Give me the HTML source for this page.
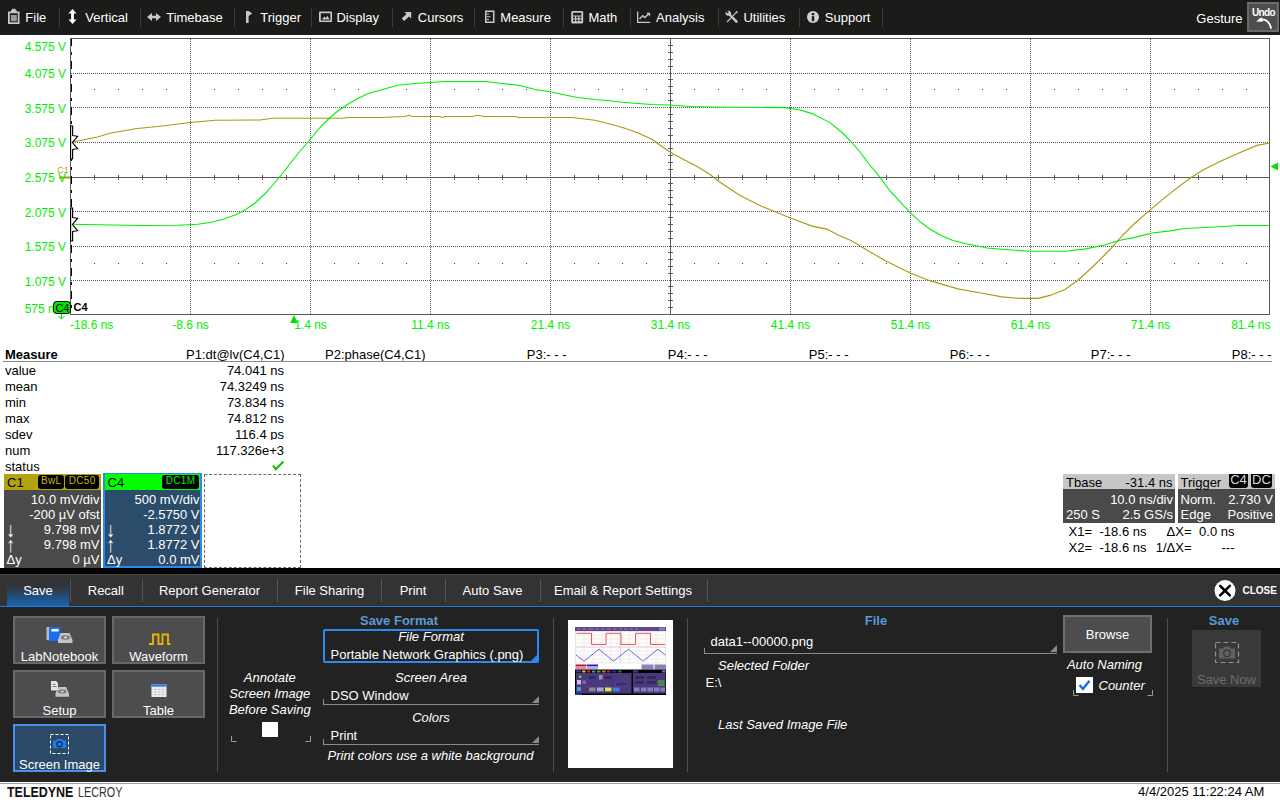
<!DOCTYPE html>
<html lang="en"><head><meta charset="utf-8"><title>Oscilloscope - Save Screen Image</title>
<style>
html,body{margin:0;padding:0;}
body{width:1280px;height:800px;overflow:hidden;background:#fff;position:relative;font-family:"Liberation Sans",Arial,sans-serif;font-size:13px;}
.t{position:absolute;white-space:pre;}
.a{position:absolute;}
.i{font-style:italic;}
.b{font-weight:bold;}
#menubar{position:absolute;left:0;top:0;width:1280px;height:35px;background:#1b1b19;}
.msep{position:absolute;top:8px;width:1px;height:19px;background:#3c3c3c;}
.btn{position:absolute;box-sizing:border-box;background:#4d4d4f;border:2px solid #686868;}
.vsep{position:absolute;width:1px;top:618px;height:154px;background:#4e4e4e;}
.tsep{position:absolute;width:1px;top:579px;height:23px;background:#555;}
.badge{position:absolute;background:#000;border-radius:3px;box-sizing:border-box;text-align:center;overflow:hidden;}
.ul{position:absolute;height:1px;background:#8a8a8a;}
</style></head><body>

<div id="menubar">
<div class="a" style="left:0;top:34px;width:1280px;height:1px;background:#10202e;"></div>
<div class="t" style="top:11.00px;font-size:13px;line-height:13px;color:#fff;left:25.3px;">File</div>
<div class="t" style="top:11.00px;font-size:13px;line-height:13px;color:#fff;left:85.3px;">Vertical</div>
<div class="t" style="top:11.00px;font-size:13px;line-height:13px;color:#fff;left:166.2px;">Timebase</div>
<div class="t" style="top:11.00px;font-size:13px;line-height:13px;color:#fff;left:260.3px;">Trigger</div>
<div class="t" style="top:11.00px;font-size:13px;line-height:13px;color:#fff;left:336.4px;">Display</div>
<div class="t" style="top:11.00px;font-size:13px;line-height:13px;color:#fff;left:417.8px;">Cursors</div>
<div class="t" style="top:11.00px;font-size:13px;line-height:13px;color:#fff;left:500.3px;">Measure</div>
<div class="t" style="top:11.00px;font-size:13px;line-height:13px;color:#fff;left:588.4px;">Math</div>
<div class="t" style="top:11.00px;font-size:13px;line-height:13px;color:#fff;left:656px;">Analysis</div>
<div class="t" style="top:11.00px;font-size:13px;line-height:13px;color:#fff;left:743.4px;">Utilities</div>
<div class="t" style="top:11.00px;font-size:13px;line-height:13px;color:#fff;left:824.8px;">Support</div>
<div class="msep" style="left:59px"></div>
<div class="msep" style="left:140px"></div>
<div class="msep" style="left:234px"></div>
<div class="msep" style="left:311px"></div>
<div class="msep" style="left:392px"></div>
<div class="msep" style="left:474px"></div>
<div class="msep" style="left:563px"></div>
<div class="msep" style="left:630px"></div>
<div class="msep" style="left:718px"></div>
<div class="msep" style="left:799px"></div>
<div class="msep" style="left:882px"></div>
<svg class="a" style="left:0;top:0" width="900" height="35" viewBox="0 0 900 35">
<g fill="#c8c8c8" stroke="none">
<!-- File: clipboard -->
<path d="M8 11.5h3v-1.5h1v-1.2h3.5v1.2h1v1.5h3v12.5h-11.5z M9.8 13.3v9h8v-9z" fill-rule="evenodd"/>
<rect x="10.8" y="15" width="6" height="6.3" fill="#9a9a9a"/>
<!-- Vertical: up-down arrow -->
<path d="M72.5 9l4 4.5h-2.6v6h2.6l-4 4.5l-4-4.5h2.6v-6h-2.6z" fill="#fff"/>
<!-- Timebase: left-right arrow -->
<path d="M147 17l5-4v2.7h4v-2.7l5 4l-5 4v-2.7h-4v2.7z"/>
<!-- Trigger: flag -->
<path d="M246 11h2.600l3.600 2.500l-3.600 2.500v7h-2.600z"/>
<!-- Display -->
<path d="M319 12.5q0-1 1-1h11q1 0 1 1v8.500q0 1-1 1h-11q-1 0-1-1z M320.800 13.200v7.200h9.600v-7.200z" fill-rule="evenodd"/>
<path d="M322 19.500l2.300-3l1.500 1.600l1.600-2.300l2.200 3.700z"/>
<!-- Cursors: arrow NE -->
<path d="M404.500 12h6.700v6.700l-2.200-2.200l-4.800 4.600l-2.500-2.500l4.800-4.600z"/>
<!-- Measure: ruler -->
<path d="M485 10.500h9.500v12.500h-9.500z M486.500 12v9.500h6.500v-9.500z" fill-rule="evenodd"/>
<path d="M486.500 13.500h2.500v1h-2.500z M486.500 16.200h4v1h-4z M486.500 19h2.500v1h-2.500z"/>
<!-- Math: calculator -->
<path d="M571.200 12.500q0-1.500 1.500-1.500h9q1.500 0 1.500 1.500v9.500q0 1.500-1.500 1.500h-9q-1.500 0-1.500-1.500z M573 12.800v2.600h8.400v-2.600z M573 16.600v1.600h2v-1.600z M576.200 16.600v1.600h2v-1.600z M579.400 16.600v1.600h2v-1.600z M573 19.600v1.600h2v-1.600z M576.200 19.600v1.600h2v-1.600z M579.400 19.600v1.600h2v-1.600z" fill-rule="evenodd"/>
<!-- Analysis: chart -->
<path d="M637 11.500h1.300v10.200h12v1.300h-13.300z"/>
<path d="M639.500 19l3.200-3.200l2.200 1.800l3.500-3.500" fill="none" stroke="#c8c8c8" stroke-width="1.400"/>
<path d="M646.500 12.800h3.600v3.600z"/>
<!-- Utilities: tools -->
<path d="M726.500 21.500l8.500-8.500l1.500-2.200l1.500 1.500l-2.200 1.500l-8.300 8.700z"/>
<path d="M727 11q2.500-.8 3.800 1.200q.7 1.200 .2 2.300l6.500 6.200q.8 1.500-.5 2q-1 .5-1.800-.5l-6-6.500q-2 .5-3.200-1q-1-1.500-.3-3l2 1.800l1.200-1.300z"/>
<!-- Support: info -->
<circle cx="813" cy="17" r="6" fill="#d0d0d0"/>
<rect x="811.800" y="13" width="2.400" height="2.200" fill="#1b1b19"/>
<rect x="811.800" y="16.200" width="2.400" height="5" fill="#1b1b19"/>
</g></svg>
<div class="t" style="top:12.00px;font-size:13px;line-height:13px;color:#fff;left:1196.3px;">Gesture</div>
<div class="a" style="left:1247px;top:2px;width:32px;height:30px;box-sizing:border-box;background:#4e4e4e;border:2px solid #6a6a6a;"></div>
<div class="t" style="top:7.93px;font-size:10px;line-height:10px;color:#fff;left:1063.5px;width:400px;text-align:center;font-weight:bold;letter-spacing:-0.6px;">Undo</div>
<svg class="a" style="left:1247px;top:2px" width="32" height="30" viewBox="0 0 32 30">
<path d="M12.500 17.500q9-1.500 11.500 8.500" fill="none" stroke="#fff" stroke-width="1.800" stroke-linecap="round"/>
<path d="M9 19.500l6-4.200l.8 4.400z" fill="#fff"/></svg>
</div>
<svg class="a" style="left:0;top:0" width="1280" height="345" viewBox="0 0 1280 345">
<g shape-rendering="crispEdges" stroke="#5a5a5a" stroke-width="1" fill="none">
<line x1="190.5" y1="39" x2="190.5" y2="314" stroke-dasharray="1 1"/>
<line x1="310.5" y1="39" x2="310.5" y2="314" stroke-dasharray="1 1"/>
<line x1="430.5" y1="39" x2="430.5" y2="314" stroke-dasharray="1 1"/>
<line x1="550.5" y1="39" x2="550.5" y2="314" stroke-dasharray="1 1"/>
<line x1="790.5" y1="39" x2="790.5" y2="314" stroke-dasharray="1 1"/>
<line x1="910.5" y1="39" x2="910.5" y2="314" stroke-dasharray="1 1"/>
<line x1="1030.5" y1="39" x2="1030.5" y2="314" stroke-dasharray="1 1"/>
<line x1="1150.5" y1="39" x2="1150.5" y2="314" stroke-dasharray="1 1"/>
<line x1="71" y1="73.5" x2="1269" y2="73.5" stroke-dasharray="1 1"/>
<line x1="71" y1="107.5" x2="1269" y2="107.5" stroke-dasharray="1 1"/>
<line x1="71" y1="142.5" x2="1269" y2="142.5" stroke-dasharray="1 1"/>
<line x1="71" y1="211.5" x2="1269" y2="211.5" stroke-dasharray="1 1"/>
<line x1="71" y1="246.5" x2="1269" y2="246.5" stroke-dasharray="1 1"/>
<line x1="71" y1="280.5" x2="1269" y2="280.5" stroke-dasharray="1 1"/>
<line x1="71" y1="177.5" x2="1269" y2="177.5"/>
<line x1="670.5" y1="39" x2="670.5" y2="314"/>
<path d="M94.5 175v5 M118.5 175v5 M142.5 175v5 M166.5 175v5 M214.5 175v5 M238.5 175v5 M262.5 175v5 M286.5 175v5 M334.5 175v5 M358.5 175v5 M382.5 175v5 M406.5 175v5 M454.5 175v5 M478.5 175v5 M502.5 175v5 M526.5 175v5 M574.5 175v5 M598.5 175v5 M622.5 175v5 M646.5 175v5 M694.5 175v5 M718.5 175v5 M742.5 175v5 M766.5 175v5 M814.5 175v5 M838.5 175v5 M862.5 175v5 M886.5 175v5 M934.5 175v5 M958.5 175v5 M982.5 175v5 M1006.5 175v5 M1054.5 175v5 M1078.5 175v5 M1102.5 175v5 M1126.5 175v5 M1174.5 175v5 M1198.5 175v5 M1222.5 175v5 M1246.5 175v5 M668 45.5h5 M668 52.5h5 M668 59.5h5 M668 66.5h5 M668 79.5h5 M668 86.5h5 M668 93.5h5 M668 100.5h5 M668 114.5h5 M668 121.5h5 M668 128.5h5 M668 135.5h5 M668 148.5h5 M668 155.5h5 M668 162.5h5 M668 169.5h5 M668 183.5h5 M668 190.5h5 M668 197.5h5 M668 204.5h5 M668 217.5h5 M668 224.5h5 M668 231.5h5 M668 238.5h5 M668 252.5h5 M668 259.5h5 M668 266.5h5 M668 273.5h5 M668 286.5h5 M668 293.5h5 M668 300.5h5 M668 307.5h5"/>
<path d="M94 89.5h1 M118 89.5h1 M142 89.5h1 M166 89.5h1 M214 89.5h1 M238 89.5h1 M262 89.5h1 M286 89.5h1 M334 89.5h1 M358 89.5h1 M382 89.5h1 M406 89.5h1 M454 89.5h1 M478 89.5h1 M502 89.5h1 M526 89.5h1 M574 89.5h1 M598 89.5h1 M622 89.5h1 M646 89.5h1 M694 89.5h1 M718 89.5h1 M742 89.5h1 M766 89.5h1 M814 89.5h1 M838 89.5h1 M862 89.5h1 M886 89.5h1 M934 89.5h1 M958 89.5h1 M982 89.5h1 M1006 89.5h1 M1054 89.5h1 M1078 89.5h1 M1102 89.5h1 M1126 89.5h1 M1174 89.5h1 M1198 89.5h1 M1222 89.5h1 M1246 89.5h1 M94 263.5h1 M118 263.5h1 M142 263.5h1 M166 263.5h1 M214 263.5h1 M238 263.5h1 M262 263.5h1 M286 263.5h1 M334 263.5h1 M358 263.5h1 M382 263.5h1 M406 263.5h1 M454 263.5h1 M478 263.5h1 M502 263.5h1 M526 263.5h1 M574 263.5h1 M598 263.5h1 M622 263.5h1 M646 263.5h1 M694 263.5h1 M718 263.5h1 M742 263.5h1 M766 263.5h1 M814 263.5h1 M838 263.5h1 M862 263.5h1 M886 263.5h1 M934 263.5h1 M958 263.5h1 M982 263.5h1 M1006 263.5h1 M1054 263.5h1 M1078 263.5h1 M1102 263.5h1 M1126 263.5h1 M1174 263.5h1 M1198 263.5h1 M1222 263.5h1 M1246 263.5h1" stroke="#404040"/>
<rect x="70.5" y="38.5" width="1199" height="276"/>
</g>
<polyline points="70.5,142.5 85,139.5 97.5,137 110,133.25 135,128.75 160,126.25 190,122.5 215,120.25 260,120 272.5,118.25 342.5,118.25 347.5,117.5 380,117.5 405,116.5 408.75,115.25 412.5,116.5 440,116.5 442.5,117.5 445,116.5 472.5,116.5 477.5,115.25 483.75,116.5 515,116.5 518.75,117.5 572.5,117.5 582.5,118.75 595,120.25 610,124 622.5,127.5 637.5,132.75 652.5,139.5 662.5,147 670,152 680,157.4 698,167 710,174.5 717.5,180.5 740,195.5 761,206 790.4,218 812,226.1 827,229.1 839,235.4 851,240.5 866,249.5 884,260 902,269 910.4,272.9 929,280.4 944,284.9 959,289.1 981,293 1002,296.9 1020,298.4 1038,298.4 1050,295.4 1065,289.4 1077,281 1092,267.5 1110,249.5 1122,236 1134,224 1150.5,209.6 1170,193.4 1191,177.5 1203,170 1221,161 1239,152.9 1257,145.4 1269.6,143" fill="none" stroke="#a89a10" stroke-width="1.1"/>
<polyline points="70.5,224.25 112.5,225 142.5,225.5 177.5,225.25 197.5,224.25 210,222.5 222.5,219.5 235,215 245,210 255,203 265,193.75 275,182.5 281.25,175 290,163.75 300,151.25 310,139.5 320,127.5 330,117.5 337.5,111.25 347.5,104.5 357.5,98.75 367.5,93.75 382.5,89.5 397.5,85.25 415,83.5 430,82.5 445,81.5 485,81.5 500,83.25 520,85.5 535,89.5 550,91.75 565,95 577.5,97.5 595,99.5 610,100.75 622.5,102.25 637.5,103.5 652.5,104.5 670,105 690,106.5 710,107 785,107.6 800,110 812,113.6 830,122.6 842,132.5 851,141.5 860,152 869,164 879.5,176.6 890,191 900.5,202.1 910.4,212.9 920,221.6 929,228.5 941,235.4 953,240.5 965,243.5 980,246.5 987,248 1008,249.8 1030.5,251.3 1065,251.3 1086,248.9 1104,245 1119,240.5 1137,236.9 1152,233 1170,230.9 1185,228.5 1215,227 1239,225.5 1269.6,225.5" fill="none" stroke="#00f000" stroke-width="1.1"/>
<line x1="71.5" y1="39" x2="71.5" y2="314" stroke="#000" stroke-width="1.600" stroke-dasharray="8 6 3 6" stroke-dashoffset="0.7" shape-rendering="crispEdges"/>
<path d="M70.600 126.0h2v9.500l5 .8l-5.200 6.200l5.200 6.200l-5 .8v9.500h-2z" fill="#fff" stroke="#000" stroke-width="1.150"/>
<path d="M70.600 208.0h2v9.500l5 .8l-5.200 6.200l5.200 6.200l-5 .8v9.500h-2z" fill="#fff" stroke="#000" stroke-width="1.150"/>
<line x1="59" y1="177.500" x2="70" y2="177.500" stroke="#a89a10" stroke-width="2"/>
<path d="M1270.500 166.500l7.500-4v8z" fill="#00e000"/>
<path d="M294 315l3.800 8h-7.600z" fill="#00e000"/>
<rect x="53.500" y="301.500" width="17" height="12" rx="3" fill="#00e400" stroke="#000" stroke-width="1"/>
<path d="M61.500 314v4.500m-3-2.500l3 3l3-3" fill="none" stroke="#00d000" stroke-width="1"/>
</svg>
<div class="t" style="top:40.84px;font-size:12px;line-height:12px;color:#00ee00;right:1214px;text-align:right;">4.575 V</div>
<div class="t" style="top:67.84px;font-size:12px;line-height:12px;color:#00ee00;right:1214px;text-align:right;">4.075 V</div>
<div class="t" style="top:102.84px;font-size:12px;line-height:12px;color:#00ee00;right:1214px;text-align:right;">3.575 V</div>
<div class="t" style="top:137.14px;font-size:12px;line-height:12px;color:#00ee00;right:1214px;text-align:right;">3.075 V</div>
<div class="t" style="top:171.84px;font-size:12px;line-height:12px;color:#00ee00;right:1214px;text-align:right;">2.575 V</div>
<div class="t" style="top:207.14px;font-size:12px;line-height:12px;color:#00ee00;right:1214px;text-align:right;">2.075 V</div>
<div class="t" style="top:240.84px;font-size:12px;line-height:12px;color:#00ee00;right:1214px;text-align:right;">1.575 V</div>
<div class="t" style="top:275.84px;font-size:12px;line-height:12px;color:#00ee00;right:1214px;text-align:right;">1.075 V</div>
<div class="t" style="top:302.84px;font-size:12px;line-height:12px;color:#00ee00;left:24.7px;width:28.5px;overflow:hidden;">575 mV</div>
<div class="t" style="top:166.38px;font-size:9px;line-height:9px;color:#b0a020;left:57.2px;">C1</div>
<div class="t" style="top:302.99px;font-size:11px;line-height:11px;color:#000;left:-137.6px;width:400px;text-align:center;letter-spacing:-0.2px;">C4</div>
<div class="t" style="top:301.99px;font-size:11px;line-height:11px;color:#000;left:73.5px;font-weight:bold;">C4</div>
<div class="t" style="top:318.84px;font-size:12px;line-height:12px;color:#00ee00;left:70px;">-18.6 ns</div>
<div class="t" style="top:318.84px;font-size:12px;line-height:12px;color:#00ee00;left:-9.5px;width:400px;text-align:center;">-8.6 ns</div>
<div class="t" style="top:318.84px;font-size:12px;line-height:12px;color:#00ee00;left:110.5px;width:400px;text-align:center;">1.4 ns</div>
<div class="t" style="top:318.84px;font-size:12px;line-height:12px;color:#00ee00;left:230.5px;width:400px;text-align:center;">11.4 ns</div>
<div class="t" style="top:318.84px;font-size:12px;line-height:12px;color:#00ee00;left:350.5px;width:400px;text-align:center;">21.4 ns</div>
<div class="t" style="top:318.84px;font-size:12px;line-height:12px;color:#00ee00;left:470.5px;width:400px;text-align:center;">31.4 ns</div>
<div class="t" style="top:318.84px;font-size:12px;line-height:12px;color:#00ee00;left:590.5px;width:400px;text-align:center;">41.4 ns</div>
<div class="t" style="top:318.84px;font-size:12px;line-height:12px;color:#00ee00;left:710.5px;width:400px;text-align:center;">51.4 ns</div>
<div class="t" style="top:318.84px;font-size:12px;line-height:12px;color:#00ee00;left:830.5px;width:400px;text-align:center;">61.4 ns</div>
<div class="t" style="top:318.84px;font-size:12px;line-height:12px;color:#00ee00;left:950.5px;width:400px;text-align:center;">71.4 ns</div>
<div class="t" style="top:318.84px;font-size:12px;line-height:12px;color:#00ee00;right:9.5px;text-align:right;">81.4 ns</div>
<div class="a" style="left:0;top:344px;width:1280px;height:18px;overflow:hidden;">
<div class="t" style="top:4.00px;font-size:13px;line-height:13px;color:#000;left:5px;font-weight:bold;">Measure</div>
<div class="t" style="top:4.00px;font-size:13px;line-height:13px;color:#000;right:995.5px;text-align:right;">P1:dt@lv(C4,C1)</div>
<div class="t" style="top:4.00px;font-size:13px;line-height:13px;color:#000;right:854.5px;text-align:right;">P2:phase(C4,C1)</div>
<div class="t" style="top:4.00px;font-size:13px;line-height:13px;color:#000;right:713.5px;text-align:right;">P3:- - -</div>
<div class="t" style="top:4.00px;font-size:13px;line-height:13px;color:#000;right:572.5px;text-align:right;">P4:- - -</div>
<div class="t" style="top:4.00px;font-size:13px;line-height:13px;color:#000;right:431.5px;text-align:right;">P5:- - -</div>
<div class="t" style="top:4.00px;font-size:13px;line-height:13px;color:#000;right:290.5px;text-align:right;">P6:- - -</div>
<div class="t" style="top:4.00px;font-size:13px;line-height:13px;color:#000;right:149.5px;text-align:right;">P7:- - -</div>
<div class="t" style="top:4.00px;font-size:13px;line-height:13px;color:#000;right:8.5px;text-align:right;">P8:- - -</div>
</div>
<div class="a" style="left:3px;top:361px;width:1269px;height:1px;background:#888;"></div>
<div class="a" style="left:0;top:360px;width:300px;height:16px;overflow:hidden;">
<div class="t" style="top:4.00px;font-size:13px;line-height:13px;color:#000;left:5px;">value</div>
<div class="t" style="top:4.00px;font-size:13px;line-height:13px;color:#000;left:284px;left:auto;right:16px;text-align:right;">74.041 ns</div>
</div>
<div class="a" style="left:0;top:376px;width:300px;height:16px;overflow:hidden;">
<div class="t" style="top:4.00px;font-size:13px;line-height:13px;color:#000;left:5px;">mean</div>
<div class="t" style="top:4.00px;font-size:13px;line-height:13px;color:#000;left:284px;left:auto;right:16px;text-align:right;">74.3249 ns</div>
</div>
<div class="a" style="left:0;top:392px;width:300px;height:16px;overflow:hidden;">
<div class="t" style="top:4.00px;font-size:13px;line-height:13px;color:#000;left:5px;">min</div>
<div class="t" style="top:4.00px;font-size:13px;line-height:13px;color:#000;left:284px;left:auto;right:16px;text-align:right;">73.834 ns</div>
</div>
<div class="a" style="left:0;top:408px;width:300px;height:16px;overflow:hidden;">
<div class="t" style="top:4.00px;font-size:13px;line-height:13px;color:#000;left:5px;">max</div>
<div class="t" style="top:4.00px;font-size:13px;line-height:13px;color:#000;left:284px;left:auto;right:16px;text-align:right;">74.812 ns</div>
</div>
<div class="a" style="left:0;top:424px;width:300px;height:16px;overflow:hidden;">
<div class="t" style="top:4.00px;font-size:13px;line-height:13px;color:#000;left:5px;">sdev</div>
<div class="t" style="top:4.00px;font-size:13px;line-height:13px;color:#000;left:284px;left:auto;right:16px;text-align:right;">116.4 ps</div>
</div>
<div class="a" style="left:0;top:440px;width:300px;height:16px;overflow:hidden;">
<div class="t" style="top:4.00px;font-size:13px;line-height:13px;color:#000;left:5px;">num</div>
<div class="t" style="top:4.00px;font-size:13px;line-height:13px;color:#000;left:284px;left:auto;right:16px;text-align:right;">117.326e+3</div>
</div>
<div class="a" style="left:0;top:456px;width:300px;height:16px;overflow:hidden;">
<div class="t" style="top:4.00px;font-size:13px;line-height:13px;color:#000;left:5px;">status</div>
</div>
<svg class="a" style="left:271px;top:459px" width="14" height="12" viewBox="0 0 14 12"><path d="M2 6.500l2.800 3.500l7.500-7.500" fill="none" stroke="#20d020" stroke-width="2.200"/><path d="M2.500 7.800l2.300 2.700l7.800-7.500" fill="none" stroke="#0a8a0a" stroke-width=".8"/></svg>
<div class="a" style="left:4px;top:474px;width:97px;height:16px;background:#b3a30f;"></div>
<div class="a" style="left:4px;top:490px;width:97px;height:78px;background:#4a4a4a;"></div>
<div class="t" style="top:476.00px;font-size:13px;line-height:13px;color:#000;left:7px;">C1</div>
<div class="badge" style="left:38px;top:475px;width:26px;height:14px;"></div>
<div class="badge" style="left:65px;top:475px;width:34px;height:14px;"></div>
<div class="t" style="top:476.34px;font-size:10px;line-height:10px;color:#c4b41c;left:-148.8px;width:400px;text-align:center;letter-spacing:.3px;">BwL</div>
<div class="t" style="top:476.34px;font-size:10px;line-height:10px;color:#c4b41c;left:-117.8px;width:400px;text-align:center;letter-spacing:.3px;">DC50</div>
<div class="t" style="top:492.50px;font-size:13px;line-height:13px;color:#fff;right:1180.5px;text-align:right;">10.0 mV/div</div>
<div class="t" style="top:507.50px;font-size:13px;line-height:13px;color:#fff;right:1180.5px;text-align:right;">-200 µV ofst</div>
<div class="t" style="top:522.50px;font-size:13px;line-height:13px;color:#fff;right:1180.5px;text-align:right;">9.798 mV</div>
<div class="t" style="top:537.50px;font-size:13px;line-height:13px;color:#fff;right:1180.5px;text-align:right;">9.798 mV</div>
<div class="t" style="top:552.50px;font-size:13px;line-height:13px;color:#fff;right:1180.5px;text-align:right;">0 µV</div>
<div class="t" style="top:519.22px;font-size:21px;line-height:21px;color:#fff;left:5.5px;transform:scaleX(.85);transform-origin:0 0;">↓</div>
<div class="t" style="top:534.22px;font-size:21px;line-height:21px;color:#fff;left:5.5px;transform:scaleX(.85);transform-origin:0 0;">↑</div>
<div class="t" style="top:552.50px;font-size:13px;line-height:13px;color:#fff;left:6.5px;">Δy</div>
<div class="a" style="left:103px;top:473px;width:99px;height:95px;background:#2b4c6b;box-sizing:border-box;border:2px solid #2a8af0;"></div>
<div class="a" style="left:105px;top:474px;width:95px;height:16px;background:#00ff00;"></div>
<div class="t" style="top:476.00px;font-size:13px;line-height:13px;color:#000;left:107.5px;">C4</div>
<div class="badge" style="left:162px;top:475px;width:37px;height:14px;"></div>
<div class="t" style="top:476.34px;font-size:10px;line-height:10px;color:#00f000;left:-19.400000000000006px;width:400px;text-align:center;letter-spacing:.3px;">DC1M</div>
<div class="t" style="top:492.50px;font-size:13px;line-height:13px;color:#fff;right:1080.5px;text-align:right;">500 mV/div</div>
<div class="t" style="top:507.50px;font-size:13px;line-height:13px;color:#fff;right:1080.5px;text-align:right;">-2.5750 V</div>
<div class="t" style="top:522.50px;font-size:13px;line-height:13px;color:#fff;right:1080.5px;text-align:right;">1.8772 V</div>
<div class="t" style="top:537.50px;font-size:13px;line-height:13px;color:#fff;right:1080.5px;text-align:right;">1.8772 V</div>
<div class="t" style="top:552.50px;font-size:13px;line-height:13px;color:#fff;right:1080.5px;text-align:right;">0.0 mV</div>
<div class="t" style="top:519.22px;font-size:21px;line-height:21px;color:#fff;left:106px;transform:scaleX(.85);transform-origin:0 0;">↓</div>
<div class="t" style="top:534.22px;font-size:21px;line-height:21px;color:#fff;left:106px;transform:scaleX(.85);transform-origin:0 0;">↑</div>
<div class="t" style="top:552.50px;font-size:13px;line-height:13px;color:#fff;left:107px;">Δy</div>
<div class="a" style="left:204px;top:474px;width:97px;height:94px;box-sizing:border-box;border:1px dashed #6a6a6a;"></div>
<div class="a" style="left:1063px;top:474px;width:112px;height:15px;background:#c6c6c6;"></div>
<div class="a" style="left:1063px;top:489px;width:112px;height:34px;background:#4a4a4a;"></div>
<div class="t" style="top:475.50px;font-size:13px;line-height:13px;color:#000;left:1066px;">Tbase</div>
<div class="t" style="top:475.50px;font-size:13px;line-height:13px;color:#000;right:107.5px;text-align:right;">-31.4 ns</div>
<div class="t" style="top:493.00px;font-size:13px;line-height:13px;color:#fff;right:107px;text-align:right;">10.0 ns/div</div>
<div class="t" style="top:507.50px;font-size:13px;line-height:13px;color:#fff;left:1066px;">250 S</div>
<div class="t" style="top:507.50px;font-size:13px;line-height:13px;color:#fff;right:107px;text-align:right;">2.5 GS/s</div>
<div class="a" style="left:1178px;top:474px;width:97px;height:15px;background:#c6c6c6;"></div>
<div class="a" style="left:1178px;top:489px;width:97px;height:34px;background:#4a4a4a;"></div>
<div class="t" style="top:475.50px;font-size:13px;line-height:13px;color:#000;left:1180.5px;">Trigger</div>
<div class="badge" style="left:1229px;top:474px;width:19px;height:14px;border-radius:0 0 3px 3px;"></div>
<div class="badge" style="left:1251px;top:474px;width:21px;height:14px;border-radius:0 0 3px 3px;"></div>
<div class="a" style="left:1229px;top:474px;width:44px;height:14px;overflow:hidden;"><div class="t" style="top:-0.80px;font-size:13px;line-height:13px;color:#d8d8d8;left:-190.5px;width:400px;text-align:center;">C4</div><div class="t" style="top:-0.80px;font-size:13px;line-height:13px;color:#d8d8d8;left:-167.5px;width:400px;text-align:center;">DC</div></div>
<div class="t" style="top:493.00px;font-size:13px;line-height:13px;color:#fff;left:1180.5px;">Norm.</div>
<div class="t" style="top:493.00px;font-size:13px;line-height:13px;color:#fff;right:7px;text-align:right;">2.730 V</div>
<div class="t" style="top:507.50px;font-size:13px;line-height:13px;color:#fff;left:1180.5px;">Edge</div>
<div class="t" style="top:507.50px;font-size:13px;line-height:13px;color:#fff;right:7px;text-align:right;">Positive</div>
<div class="t" style="top:524.50px;font-size:13px;line-height:13px;color:#000;left:1068.5px;">X1=</div>
<div class="t" style="top:524.50px;font-size:13px;line-height:13px;color:#000;right:133.5px;text-align:right;">-18.6 ns</div>
<div class="t" style="top:524.50px;font-size:13px;line-height:13px;color:#000;right:88.5px;text-align:right;">ΔX=</div>
<div class="t" style="top:524.50px;font-size:13px;line-height:13px;color:#000;right:45.5px;text-align:right;">0.0 ns</div>
<div class="t" style="top:540.50px;font-size:13px;line-height:13px;color:#000;left:1068.5px;">X2=</div>
<div class="t" style="top:540.50px;font-size:13px;line-height:13px;color:#000;right:133.5px;text-align:right;">-18.6 ns</div>
<div class="t" style="top:540.50px;font-size:13px;line-height:13px;color:#000;right:88.5px;text-align:right;">1/ΔX=</div>
<div class="t" style="top:540.50px;font-size:13px;line-height:13px;color:#000;right:45.5px;text-align:right;">---</div>
<div class="a" style="left:0;top:568px;width:1280px;height:6px;background:#000;"></div>
<div class="a" style="left:0;top:574px;width:1280px;height:32px;background:#333;border-top:1px solid #454545;box-sizing:border-box;"></div>
<div class="a" style="left:7px;top:575px;width:62px;height:31px;background:linear-gradient(to bottom,#333 0%,#323437 35%,#20507f 72%,#1667b2 100%);"></div>
<div class="a" style="left:0;top:605.500px;width:1280px;height:1.500px;background:#1b7bd6;"></div>
<div class="a" style="left:0;top:607px;width:1280px;height:175px;background:#222;"></div>
<div class="a" style="left:0;top:783px;width:1280px;height:1px;background:#9a9a9a;"></div>
<div class="t" style="top:583.60px;font-size:13px;line-height:13px;color:#fff;left:-162px;width:400px;text-align:center;">Save</div>
<div class="t" style="top:583.60px;font-size:13px;line-height:13px;color:#fff;left:-94.2px;width:400px;text-align:center;">Recall</div>
<div class="t" style="top:583.60px;font-size:13px;line-height:13px;color:#fff;left:9.5px;width:400px;text-align:center;">Report Generator</div>
<div class="t" style="top:583.60px;font-size:13px;line-height:13px;color:#fff;left:129.5px;width:400px;text-align:center;">File Sharing</div>
<div class="t" style="top:583.60px;font-size:13px;line-height:13px;color:#fff;left:213px;width:400px;text-align:center;">Print</div>
<div class="t" style="top:583.60px;font-size:13px;line-height:13px;color:#fff;left:292.6px;width:400px;text-align:center;">Auto Save</div>
<div class="t" style="top:583.60px;font-size:13px;line-height:13px;color:#fff;left:423px;width:400px;text-align:center;">Email &amp; Report Settings</div>
<div class="tsep" style="left:70px"></div>
<div class="tsep" style="left:142px"></div>
<div class="tsep" style="left:277px"></div>
<div class="tsep" style="left:381px"></div>
<div class="tsep" style="left:445px"></div>
<div class="tsep" style="left:540px"></div>
<div class="tsep" style="left:707px"></div>
<svg class="a" style="left:1212px;top:578px" width="26" height="26" viewBox="0 0 26 26"><circle cx="13" cy="12.600" r="10.500" fill="#fff"/><path d="M8.200 7.800l9.600 9.600m0-9.600l-9.600 9.600" stroke="#000" stroke-width="2.600" stroke-linecap="round"/></svg>
<div class="t" style="top:586.03px;font-size:10px;line-height:10px;color:#fff;left:1242.5px;font-weight:bold;">CLOSE</div>
<div class="btn" style="left:13px;top:616px;width:93px;height:48px;"></div>
<div class="t" style="top:649.60px;font-size:13px;line-height:13px;color:#fff;left:-140.5px;width:400px;text-align:center;">LabNotebook</div>
<div class="btn" style="left:112px;top:616px;width:93px;height:48px;"></div>
<div class="t" style="top:649.60px;font-size:13px;line-height:13px;color:#fff;left:-41.5px;width:400px;text-align:center;">Waveform</div>
<div class="btn" style="left:13px;top:670px;width:93px;height:48px;"></div>
<div class="t" style="top:703.60px;font-size:13px;line-height:13px;color:#fff;left:-140.5px;width:400px;text-align:center;">Setup</div>
<div class="btn" style="left:112px;top:670px;width:93px;height:48px;"></div>
<div class="t" style="top:703.60px;font-size:13px;line-height:13px;color:#fff;left:-41.5px;width:400px;text-align:center;">Table</div>
<div class="btn" style="left:13px;top:724px;width:93px;height:48px;background:#2a4a68;border-color:#4a90e8;"></div>
<div class="t" style="top:757.60px;font-size:13px;line-height:13px;color:#fff;left:-140.5px;width:400px;text-align:center;">Screen Image</div>
<svg class="a" style="left:0;top:607px" width="220" height="170" viewBox="0 607 220 170">
<!-- labnotebook -->
<rect x="46.500" y="627" width="2.500" height="13" fill="#bbb"/>
<rect x="49" y="627" width="11.500" height="14" fill="#1c6ff0"/><rect x="51.500" y="629" width="7" height="2.500" fill="#fff"/>
<path d="M60.500 633h9l3 7v3h-14.500v-3z" fill="#c4c4c4"/><ellipse cx="65.500" cy="637.500" rx="4.500" ry="2.200" fill="#777"/><ellipse cx="65.500" cy="637.500" rx="1.800" ry=".9" fill="#ddd"/>
<!-- waveform -->
<path d="M149 644h4v-9.500h5.500v9.500h4v-9.500h5.500v9.500h2.500" fill="none" stroke="#f0b400" stroke-width="1.800"/>
<!-- setup -->
<path d="M51 681h5l2 2v7.500h-7z" fill="#e4e4e4"/><path d="M52.500 684.500h3m-3 2h4" stroke="#666" stroke-width=".8"/>
<path d="M58.500 687h7.500l3 6.500v3.200h-13.500v-3.200z" fill="#c4c4c4"/><ellipse cx="62.200" cy="691.500" rx="4.200" ry="2.100" fill="#777"/><ellipse cx="62.200" cy="691.500" rx="1.700" ry=".85" fill="#ddd"/>
<!-- table -->
<rect x="151.500" y="684.500" width="15" height="12.500" fill="#f4f4f4"/><rect x="151.500" y="684.500" width="15" height="2.200" fill="#2a7af0"/>
<path d="M151.500 689.500h15m-15 2.500h15m-15 2.500h15M155.300 686.700v10.300m3.700-10.300v10.300m3.700-10.300v10.300" stroke="#c4c4c4" stroke-width=".7"/>
<!-- screen image -->
<rect x="50.500" y="734.500" width="18" height="19" fill="none" stroke="#fff" stroke-width="1" stroke-dasharray="3 2"/>
<path d="M53 740.500h3l1-1.500h5l1 1.500h3v7.500h-13z" fill="#1c7cf0"/><circle cx="59.500" cy="744.200" r="2.600" fill="none" stroke="#123" stroke-width="1.100"/>
</svg>
<div class="vsep" style="left:217px"></div>
<div class="vsep" style="left:553px"></div>
<div class="vsep" style="left:687px"></div>
<div class="vsep" style="left:1167px"></div>
<div class="t" style="top:671.00px;font-size:13px;line-height:13px;color:#fff;left:69.80000000000001px;width:400px;text-align:center;font-style:italic;">Annotate</div>
<div class="t" style="top:687.00px;font-size:13px;line-height:13px;color:#fff;left:69.80000000000001px;width:400px;text-align:center;font-style:italic;">Screen Image</div>
<div class="t" style="top:703.00px;font-size:13px;line-height:13px;color:#fff;left:69.80000000000001px;width:400px;text-align:center;font-style:italic;">Before Saving</div>
<div class="a" style="left:262px;top:722px;width:15.500px;height:15px;background:#fff;"></div>
<svg class="a" style="left:231px;top:736px" width="80" height="6"><path d="M.5 0v5.500h5M79.5 0v5.500h-5" fill="none" stroke="#9a9a9a" stroke-width="1"/></svg>
<div class="t" style="top:614.00px;font-size:13px;line-height:13px;color:#5b9bd5;left:199px;width:400px;text-align:center;font-weight:bold;">Save Format</div>
<div class="a" style="left:323px;top:629px;width:216px;height:34px;box-sizing:border-box;border:2px solid #2a8af0;border-radius:2px;"></div>
<svg class="a" style="left:530px;top:654px" width="8" height="8"><path d="M8 0v8h-8z" fill="#2a8af0"/></svg>
<div class="t" style="top:630.20px;font-size:13px;line-height:13px;color:#fff;left:231px;width:400px;text-align:center;font-style:italic;">File Format</div>
<div class="t" style="top:647.70px;font-size:13px;line-height:13px;color:#fff;left:330.5px;">Portable Network Graphics (.png)</div>
<div class="t" style="top:670.70px;font-size:13px;line-height:13px;color:#fff;left:231px;width:400px;text-align:center;font-style:italic;">Screen Area</div>
<div class="t" style="top:689.00px;font-size:13px;line-height:13px;color:#fff;left:330.5px;">DSO Window</div>
<div class="ul" style="left:323px;top:704px;width:216px;"></div>
<div class="a" style="left:323px;top:699px;width:1px;height:5px;background:#8a8a8a;"></div>
<svg class="a" style="left:532px;top:696px" width="7" height="7"><path d="M7 0v7h-7z" fill="#8a8a8a"/></svg>
<div class="t" style="top:711.00px;font-size:13px;line-height:13px;color:#fff;left:231px;width:400px;text-align:center;font-style:italic;">Colors</div>
<div class="t" style="top:729.20px;font-size:13px;line-height:13px;color:#fff;left:330.5px;">Print</div>
<div class="ul" style="left:323px;top:744px;width:216px;"></div>
<div class="a" style="left:323px;top:739px;width:1px;height:5px;background:#8a8a8a;"></div>
<svg class="a" style="left:532px;top:736px" width="7" height="7"><path d="M7 0v7h-7z" fill="#8a8a8a"/></svg>
<div class="t" style="top:749.00px;font-size:13px;line-height:13px;color:#fff;left:327.5px;font-style:italic;">Print colors use a white background</div>
<svg class="a" style="left:568px;top:620px" width="105" height="148" viewBox="0 0 105 148">
<rect width="105" height="148" fill="#fff"/>
<rect x="7" y="7" width="91" height="4" fill="#5a4a8c"/>
<path d="M9 9h3m2 0h4m2 0h5m2 0h4m2 0h4m2 0h4m2 0h4m2 0h3m2 0h4m2 0h3m2 0h3" stroke="#9a8cc4" stroke-width=".8"/>
<rect x="91" y="7.500" width="6" height="3" fill="#8a7cb8"/>
<rect x="7.500" y="11.500" width="90" height="31.500" fill="#fdfbfb" stroke="#d8d0d0" stroke-width=".5"/>
<path d="M7 15h91M7 19h91M7 23h91M7 27h91M7 31h91M7 35h91M7 39h91M16 11v32M25 11v32M34 11v32M43 11v32M52 11v32M61 11v32M70 11v32M79 11v32M88 11v32" stroke="#eadede" stroke-width=".5"/>
<path d="M52.500 11v32M7 27h91" stroke="#c8bcbc" stroke-width=".5"/>
<path d="M8.500 13.300h15v11.200h14.500v-11.200h15v11.200h14.500v-11.200h15v11.200h14.500" fill="none" stroke="#e04848" stroke-width=".9"/>
<path d="M8 35l8 6.200l15-12l14.500 12l15-12l14.500 12l15-12l7.500 6" fill="none" stroke="#5a5ad8" stroke-width=".9"/>
<rect x="7.500" y="44.500" width="11" height="2" fill="#c01030"/><rect x="7.500" y="46.500" width="11" height="3" fill="#d890b8"/>
<rect x="19" y="44.500" width="11" height="2" fill="#2020b8"/><rect x="19" y="46.500" width="11" height="3" fill="#c0a8e0"/>
<rect x="73.500" y="44.500" width="12" height="5" fill="#8e80b4"/><rect x="86.500" y="44.500" width="11.500" height="5" fill="#8e80b4"/>
<rect x="7" y="49.500" width="91" height="25.500" fill="#000"/>
<rect x="8" y="50.300" width="5" height="2.200" fill="#4a3a7c"/>
<rect x="14" y="50.500" width="3.500" height="2" fill="#e0c020"/><rect x="19" y="50.500" width="3.500" height="2" fill="#e02050"/><rect x="24" y="50.500" width="3.500" height="2" fill="#20a0c0"/><rect x="29" y="50.500" width="3.500" height="2" fill="#60a020"/><rect x="34" y="50.500" width="3.500" height="2" fill="#d08020"/><rect x="39" y="50.500" width="3.500" height="2" fill="#c02030"/><rect x="44" y="50.500" width="4.500" height="2" fill="#2020d0"/><rect x="50" y="50.500" width="3.500" height="2" fill="#208030"/>
<rect x="65" y="50.300" width="5" height="2.200" fill="#4a3a7c"/><rect x="94" y="50.300" width="3.500" height="2.200" fill="#7a6aa8"/>
<rect x="8" y="53" width="55.500" height="20.500" fill="#4a3a7c"/><rect x="65" y="53" width="32.500" height="20.500" fill="#4a3a7c"/>
<rect x="11" y="55.500" width="2.500" height="2.500" fill="#60d060"/>
<rect x="9" y="60" width="4" height="4.500" fill="#e0b0e8"/><rect x="14.500" y="60.500" width="3.500" height="3.500" fill="#7a6aa8"/><rect x="9" y="67" width="4" height="4" fill="#40a0d0"/>
<rect x="21" y="56" width="7" height="3" fill="#332860"/><rect x="31" y="55" width="3.500" height="4.500" fill="#9a8cc4"/><rect x="36" y="56" width="8" height="3" fill="#332860"/>
<rect x="47.500" y="62" width="12" height="4" fill="#3e3070" stroke="#6a5a9a" stroke-width=".4"/>
<rect x="21" y="67.500" width="6.500" height="3.800" fill="#8a8a8a"/><rect x="29" y="67.500" width="6.500" height="3.800" fill="#a8a8c8"/><rect x="37" y="67.500" width="6.500" height="3.800" fill="#e0e040"/><rect x="45" y="67.500" width="6.500" height="3.800" fill="#4080e0"/>
<rect x="67" y="56" width="9" height="3" fill="#332860"/><rect x="79" y="56" width="9" height="3" fill="#332860"/><rect x="67" y="61" width="9" height="3" fill="#332860"/><rect x="79" y="61" width="9" height="3" fill="#332860"/>
<rect x="66" y="67.500" width="5.500" height="4" fill="#8a7ab8"/><rect x="73" y="67.500" width="5.500" height="4" fill="#8a7ab8"/><rect x="79.500" y="67.500" width="5.500" height="4" fill="#8a7ab8"/><rect x="86" y="67.500" width="5.500" height="4" fill="#8a7ab8"/><rect x="92.500" y="67.500" width="4.500" height="4" fill="#8a7ab8"/>
<rect x="90" y="60" width="6.500" height="6" fill="#4a8a4a"/>
<rect x="7" y="73.500" width="7" height="1.500" fill="#2030d0"/>
</svg>
<div class="t" style="top:614.00px;font-size:13px;line-height:13px;color:#5b9bd5;left:676px;width:400px;text-align:center;font-weight:bold;">File</div>
<div class="t" style="top:635.40px;font-size:13px;line-height:13px;color:#fff;left:710.5px;">data1--00000.png</div>
<div class="ul" style="left:704px;top:653px;width:353px;"></div>
<div class="a" style="left:704px;top:648px;width:1px;height:5px;background:#8a8a8a;"></div>
<svg class="a" style="left:1050px;top:645px" width="7" height="7"><path d="M7 0v7h-7z" fill="#8a8a8a"/></svg>
<div class="t" style="top:659.00px;font-size:13px;line-height:13px;color:#fff;left:718px;font-style:italic;">Selected Folder</div>
<div class="t" style="top:676.20px;font-size:13px;line-height:13px;color:#fff;left:705.5px;">E:\</div>
<div class="t" style="top:717.50px;font-size:13px;line-height:13px;color:#fff;left:718px;font-style:italic;">Last Saved Image File</div>
<div class="btn" style="left:1063px;top:615px;width:89px;height:38px;border-color:#707070;"></div>
<div class="t" style="top:627.80px;font-size:13px;line-height:13px;color:#fff;left:907.5px;width:400px;text-align:center;">Browse</div>
<div class="t" style="top:657.60px;font-size:13px;line-height:13px;color:#fff;left:904.5px;width:400px;text-align:center;font-style:italic;">Auto Naming</div>
<div class="a" style="left:1076px;top:677px;width:17px;height:16px;background:#fff;"></div>
<svg class="a" style="left:1076px;top:677px" width="17" height="16"><path d="M3.500 8l3.500 3.800l6.500-8" fill="none" stroke="#1c6fe0" stroke-width="2.400"/></svg>
<div class="t" style="top:678.60px;font-size:13px;line-height:13px;color:#fff;left:1098.5px;font-style:italic;">Counter</div>
<svg class="a" style="left:1073px;top:690px" width="80" height="6"><path d="M.5 0v5.500h5M79.5 0v5.500h-5" fill="none" stroke="#9a9a9a" stroke-width="1"/></svg>
<div class="t" style="top:614.00px;font-size:13px;line-height:13px;color:#5b9bd5;left:1024px;width:400px;text-align:center;font-weight:bold;">Save</div>
<div class="a" style="left:1192px;top:630px;width:69px;height:57px;background:#393939;"></div>
<svg class="a" style="left:1212px;top:640px" width="30" height="26" viewBox="0 0 30 26">
<rect x="3.500" y="2.500" width="23" height="20" fill="none" stroke="#909090" stroke-width="1.200" stroke-dasharray="5 3"/>
<path d="M7 8.500h4l1.300-2h5.400l1.300 2h4v10h-16z" fill="#606060"/><circle cx="15" cy="13.300" r="3.300" fill="none" stroke="#393939" stroke-width="1.300"/></svg>
<div class="t" style="top:672.80px;font-size:13px;line-height:13px;color:#6c6c6c;left:1026.5px;width:400px;text-align:center;">Save Now</div>
<div class="a" style="left:7px;top:784px;height:16px;white-space:pre;color:#111;font-size:15px;line-height:16px;"><span style="display:inline-block;font-weight:bold;transform:scaleX(.83);transform-origin:0 0;width:71px;">TELEDYNE</span><span style="display:inline-block;transform:scaleX(.72);transform-origin:0 0;color:#333;">LECROY</span></div>
<div class="t" style="top:785.40px;font-size:13px;line-height:13px;color:#000;right:15.700000000000045px;text-align:right;">4/4/2025 11:22:24 AM</div>
</body></html>
